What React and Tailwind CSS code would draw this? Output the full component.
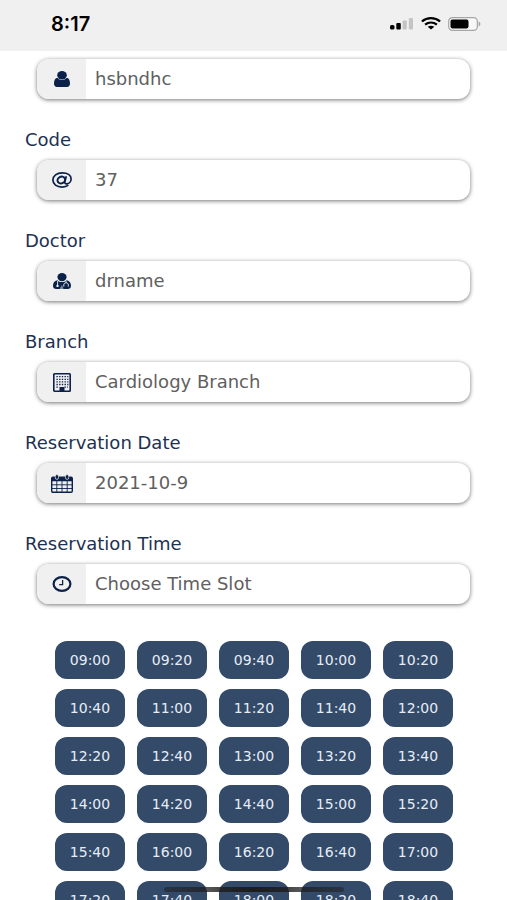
import { useState } from 'react';

const UserIcon = () => (
  <svg viewBox="0 0 16 16" className="w-4 h-4" fill="currentColor" aria-hidden="true">
    <ellipse cx="8" cy="4.2" rx="4.8" ry="4.2" />
    <path d="M3.4 6.8C1.2 7 0 9.4 0 12.4 0 14.4 1.2 16 3 16h10c1.8 0 3-1.6 3-3.6 0-3-1.2-5.4-3.4-5.6C11.5 8.2 9.9 9 8 9S4.5 8.2 3.4 6.8z" />
  </svg>
);

const AtIcon = () => (
  <svg viewBox="0 0 20 16" className="w-5 h-4" fill="none" stroke="currentColor" aria-hidden="true">
    <path strokeWidth="1.7" d="M16.3 13.2C14.8 14.5 12.5 15.1 10 15.1 4.8 15.1 0.9 12.2 0.9 8S4.8 0.9 10.2 0.9c5.2 0 8.9 2.4 8.9 6 0 2.900-2.200 4.900-4.600 4.900-1.500 0-1.900-.9-1.600-2.100l1.400-5.500" />
    <ellipse cx="9.3" cy="8" rx="3.9" ry="3.3" strokeWidth="2" transform="rotate(-28 9.3 8)" />
  </svg>
);

const DoctorIcon = () => (
  <svg viewBox="0 0 18 16" className="w-[18px] h-4" aria-hidden="true">
    <ellipse cx="9" cy="4.1" rx="4.6" ry="4.1" fill="currentColor" />
    <path fill="currentColor" d="M4.2 7.2C1.3 7.8 0 9.8 0 12.8 0 14.9 1.3 16 3.3 16h11.4c2 0 3.3-1.1 3.3-3.2 0-3-1.3-5-4.2-5.6C12.5 8.5 10.9 9 9 9s-3.5-.5-4.800-1.800z" />
    <path fill="none" stroke="#f0f0f0" strokeWidth="0.900" d="M4.600 8v4.300M13 8v1.600M10.800 13.600v-1.800c0-1.200.9-2 2.200-2s2.300.8 2.300 2v1.800" />
    <circle cx="4.5" cy="12.9" r="1.2" fill="#f0f0f0" />
    <path fill="#f0f0f0" d="M6.600 16l2.400-4.200 1.600 4.200z" opacity="0.5" />
  </svg>
);

const BuildingIcon = () => (
  <svg viewBox="0 0 18 19" className="w-[18px] h-[19px]" aria-hidden="true">
    <rect x="0.8" y="0.8" width="16.4" height="17.4" rx="0.7" fill="none" stroke="currentColor" strokeWidth="1.6" />
    <path
      fill="none"
      stroke="currentColor"
      strokeWidth="1.3"
      strokeDasharray="1.4 1.3"
      d="M3.4 3.7h12M3.4 6.3h12M3.4 8.9h12M3.4 11.5h12M3.4 14.1h2.8M11.5 14.1h3.5"
    />
    <path fill="currentColor" d="M6.500 14h5v4.500h-5z" />
  </svg>
);

const CalendarIcon = () => (
  <svg viewBox="0 0 22 19" className="w-[22px] h-[19px]" aria-hidden="true">
    <rect x="0.7" y="3.3" width="20.6" height="15" rx="1.2" fill="none" stroke="currentColor" strokeWidth="1.4" />
    <path fill="currentColor" d="M1 3h20v4.200H1z" />
    <path fill="none" stroke="currentColor" strokeWidth="0.9" d="M1 10.800h20M1 14.500h20M5.800 7v11M11 7v11M16.200 7v11" />
    <rect x="4.3" y="0.6" width="3.2" height="4.8" rx="1.6" fill="currentColor" stroke="#f0f0f0" strokeWidth="0.7" />
    <rect x="14.5" y="0.6" width="3.2" height="4.8" rx="1.6" fill="currentColor" stroke="#f0f0f0" strokeWidth="0.7" />
  </svg>
);

const ClockIcon = () => (
  <svg viewBox="0 0 20 16" className="w-5 h-4" fill="none" stroke="currentColor" aria-hidden="true">
    <ellipse cx="10" cy="8" rx="8.4" ry="6.9" strokeWidth="2.2" />
    <path strokeWidth="1.3" d="M10.6 4v4.700H7.200" />
  </svg>
);

const fields = [
  { id: 'name', value: 'hsbndhc', icon: UserIcon },
  { id: 'code', label: 'Code', value: '37', icon: AtIcon },
  { id: 'doctor', label: 'Doctor', value: 'drname', icon: DoctorIcon },
  { id: 'branch', label: 'Branch', value: 'Cardiology Branch', icon: BuildingIcon },
  { id: 'date', label: 'Reservation Date', value: '2021-10-9', icon: CalendarIcon },
  { id: 'time', label: 'Reservation Time', value: '', placeholder: 'Choose Time Slot', icon: ClockIcon },
];

const slots = [
  '09:00', '09:20', '09:40', '10:00', '10:20',
  '10:40', '11:00', '11:20', '11:40', '12:00',
  '12:20', '12:40', '13:00', '13:20', '13:40',
  '14:00', '14:20', '14:40', '15:00', '15:20',
  '15:40', '16:00', '16:20', '16:40', '17:00',
  '17:20', '17:40', '18:00', '18:20', '18:40',
];

function StatusBar() {
  return (
    <header className="flex h-[51px] shrink-0 items-center justify-between bg-[#f0f0f0] pr-[26px] pl-[51px] pb-1 text-black">
      <span className="font-['Inter'] text-xl font-semibold">8:17</span>
      <div className="flex items-center gap-[7px]">
        <svg viewBox="0 0 24 12" className="h-3 w-6" aria-hidden="true">
          <rect x="0" y="7" width="4.5" height="4.5" rx="1.6" />
          <rect x="6.3" y="5" width="4.5" height="6.5" rx="1" />
          <rect x="12.6" y="2.5" width="4.2" height="9" rx="1" fill="#c4c4c4" />
          <rect x="18.8" y="0" width="4.2" height="11.5" rx="1" fill="#c4c4c4" />
        </svg>
        <svg viewBox="0 0 20 13" className="h-[13px] w-5" fill="none" stroke="#000" strokeWidth="2.3" aria-hidden="true">
          <path d="M0.900 4.500C6 0.100 14 0.100 19.100 4.500" />
          <path d="M4.100 7.700c3.500-2.800 8.300-2.800 11.800 0" />
          <path d="M6.700 9.800c2-1.500 4.600-1.500 6.600 0L10 12.600z" fill="#000" stroke="none" />
        </svg>
        <svg viewBox="0 0 33 14" className="h-3.5 w-[33px]" aria-hidden="true">
          <rect x="0.7" y="0.7" width="28.6" height="12.6" rx="3.6" fill="#f8f8f8" stroke="#a6a6a6" strokeWidth="1.2" />
          <rect x="2.5" y="2.6" width="18" height="8.8" rx="1.8" />
          <path d="M30.600 4.600c2.400.8 2.400 4 0 4.800z" fill="#a6a6a6" />
        </svg>
      </div>
    </header>
  );
}

function Field({ field, value }) {
  const Icon = field.icon;

  return (
    <div>
      {field.label && (
        <label htmlFor={field.id} className="mt-[29px] mb-2 block px-[25px] text-lg leading-6 text-[#1d3152]">
          {field.label}
        </label>
      )}
      <div className="mx-[37px] flex h-10 overflow-hidden rounded-xl bg-white shadow-[0_1px_4px_rgba(0,0,0,0.55)]">
        <span className="flex w-[49px] shrink-0 items-center justify-center bg-[#f0f0f0] text-[#0b2149]">
          <Icon />
        </span>
        <input
          id={field.id}
          type="text"
          readOnly
          value={value}
          placeholder={field.placeholder}
          aria-label={field.label ? undefined : 'Name'}
          className="min-w-0 flex-1 px-[9px] text-lg text-[#606060] outline-none placeholder:text-[#606060]"
        />
      </div>
    </div>
  );
}

export default function App() {
  const [slot, setSlot] = useState('');

  return (
    <div className="relative flex h-screen flex-col overflow-hidden bg-white font-['DejaVu_Sans',sans-serif]">
      <StatusBar />

      <main className="min-h-0 flex-1 overflow-hidden pt-2">
        <form>
          {fields.map((field) => (
            <Field key={field.id} field={field} value={field.id === 'time' ? slot : field.value} />
          ))}

          <div className="mt-[37px] grid grid-cols-5 gap-x-3 gap-y-[10px] pr-[54px] pl-[55px]">
            {slots.map((time) => (
              <button
                key={time}
                type="button"
                onClick={() => setSlot(time)}
                className="h-[38px] rounded-xl bg-[#344a69] text-sm text-[#e6edf7]"
              >
                {time}
              </button>
            ))}
          </div>
        </form>
      </main>

      {/* home indicator */}
      <div className="absolute inset-x-0 bottom-2 mx-auto h-[5px] w-[180px] rounded-full bg-linear-to-r from-[#1c1c1c]/50 via-[#1c1c1c] to-[#1c1c1c]/50" />
    </div>
  );
}
